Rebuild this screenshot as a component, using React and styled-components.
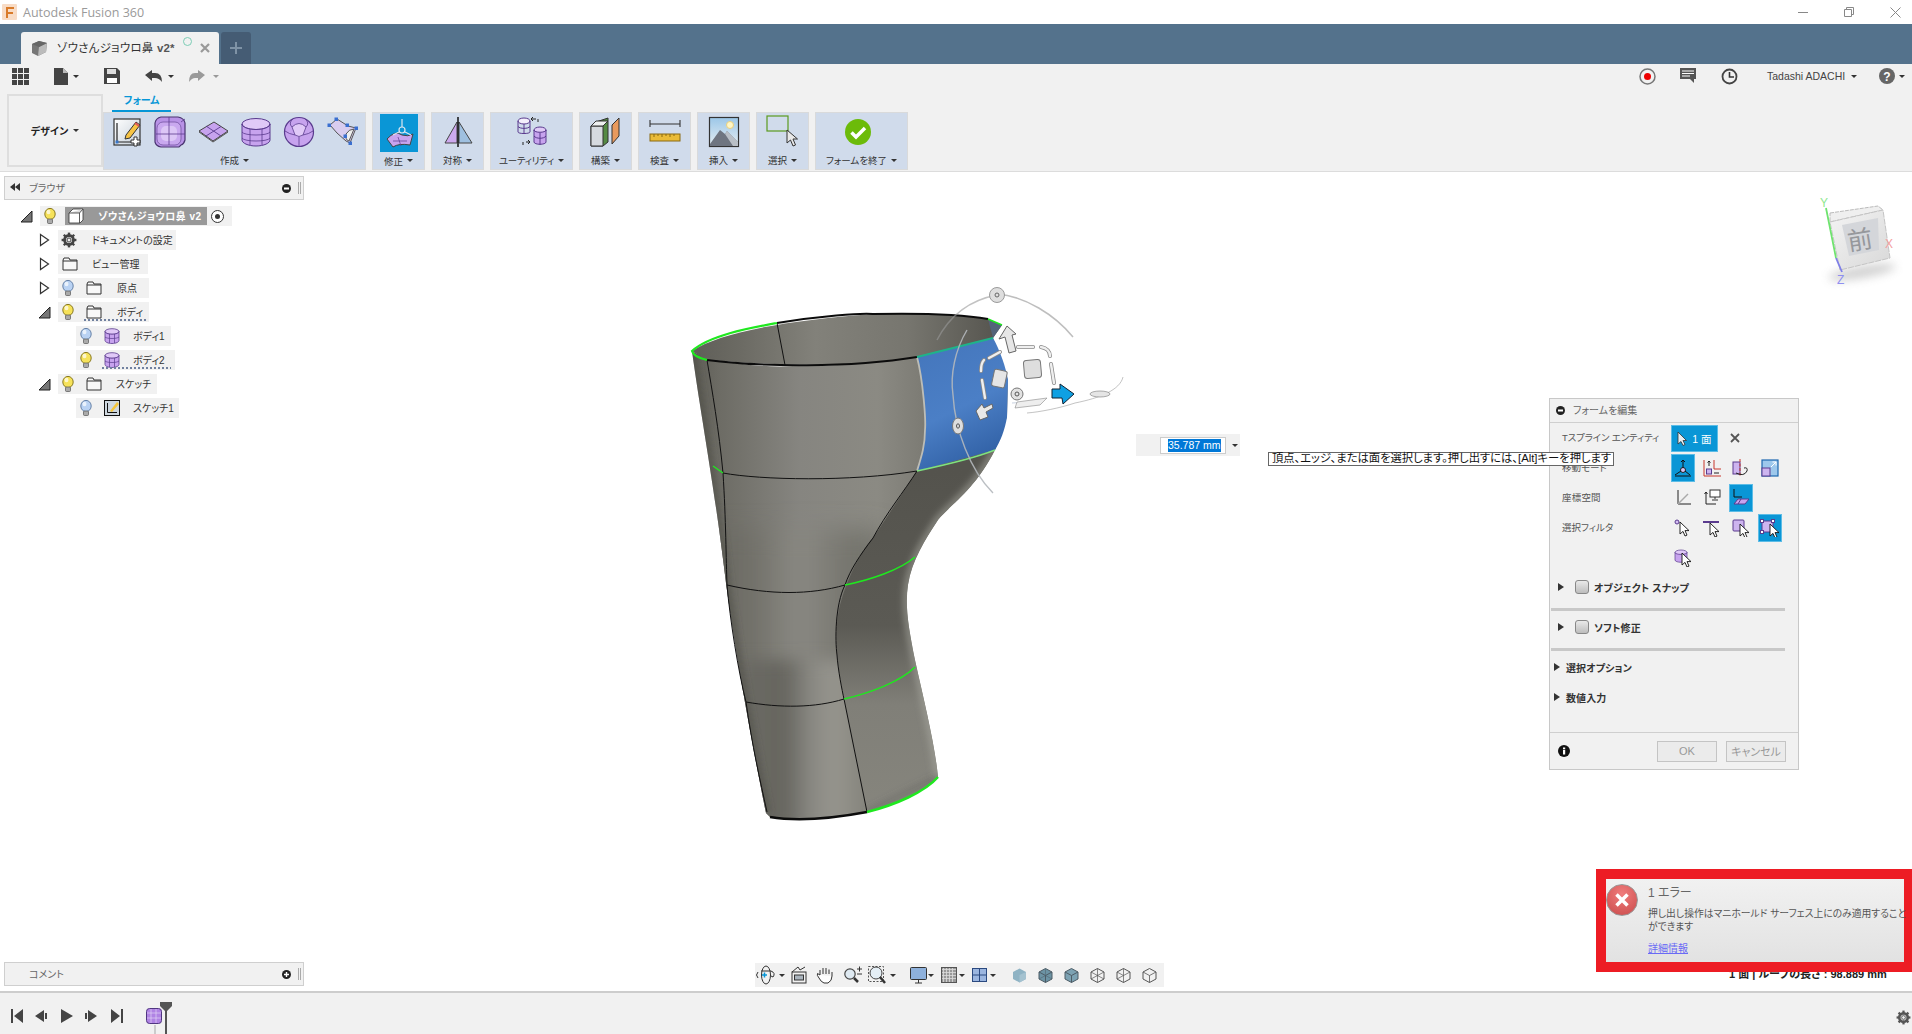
import React from 'react';
import styled, { createGlobalStyle } from 'styled-components';

const Global = createGlobalStyle`
  html, body { margin: 0; padding: 0; background: #fff; }
  body { font-family: "Liberation Sans", "Noto Sans CJK JP", sans-serif; font-feature-settings: "palt"; overflow: hidden; }
  #root { width: 1912px; height: 1034px; }
  * { box-sizing: border-box; }
`;

const Page = styled.div`width:1912px;height:1034px;display:flex;flex-direction:column;overflow:hidden;background:#fff;`;
const TitleBar = styled.div`height:24px;flex:none;display:flex;align-items:center;background:#fff;padding-left:2px;position:relative;`;
const TitleText = styled.span`font:12.5px "Open Sans",sans-serif;color:#9a9a9a;margin-left:5px;`;
const WinControls = styled.div`margin-left:auto;display:flex;align-items:center;gap:36px;padding-right:11px;`;
const TabBar = styled.div`height:40px;flex:none;background:#54728c;display:flex;align-items:flex-end;padding-left:21px;gap:2px;`;
const Tab = styled.div`width:198px;height:32px;background:#f1f1f1;border-radius:3px 3px 0 0;display:flex;align-items:center;padding-left:10px;position:relative;`;
const TabTitle = styled.span`font-size:11.5px;color:#333;margin-left:9px;letter-spacing:.2px;white-space:nowrap;padding-bottom:2px;`;
const TabVer = styled.b`color:#555;`;
const TabDot = styled.span`position:absolute;left:162px;top:5px;width:9px;height:9px;border:1.5px solid #7ccdb6;border-radius:50%;`;
const TabClose = styled.span`position:absolute;left:179px;top:11px;`;
const NewTab = styled.div`width:30px;height:32px;background:#455c74;border-radius:3px 3px 0 0;display:flex;align-items:center;justify-content:center;`;
const QuickBar = styled.div`height:28px;flex:none;background:#f1f1f1;display:flex;align-items:center;padding-bottom:4px;position:relative;`;
const QuickSlot = styled.div`display:flex;align-items:center;flex:none;margin-left:${p=>p.$ml}px;`;
const UserName = styled.span`font-size:10.5px;color:#444;white-space:nowrap;`;
const Caret = styled.span`display:inline-block;flex:none;width:0;height:0;border-left:${p=>p.$s||3}px solid transparent;border-right:${p=>p.$s||3}px solid transparent;border-top:${p=>p.$s?p.$s:3}px solid ${p=>p.$c||'#333'};margin-left:${p=>p.$ml??0}px;`;
const Ribbon = styled.div`height:80px;flex:none;background:#f1f1f1;border-bottom:1px solid #dcdcdc;display:flex;align-items:flex-start;padding-left:7px;`;
const DesignBtn = styled.div`width:96px;height:73px;margin-top:2px;border:2px solid #dedede;display:flex;align-items:center;justify-content:center;font-size:10px;font-weight:700;color:#222;gap:5px;`;
const RibbonCol = styled.div`display:flex;flex-direction:column;`;
const RibbonTab = styled.div`height:20px;margin-left:9px;width:59px;text-align:center;font-size:10px;font-weight:700;color:#0696d7;border-bottom:2px solid #0696d7;line-height:17px;`;
const Groups = styled.div`display:flex;gap:6px;`;
const Group = styled.div`width:${p=>p.$w}px;height:58px;background:#d0dbeb;border:1px solid #d9dadb;display:flex;flex-direction:column;align-items:center;`;
const GroupIcons = styled.div`height:38px;display:flex;align-items:center;justify-content:center;gap:11px;margin-right:${p=>p.$mr||0}px;`;
const ActiveIcon = styled.div`width:38px;height:38px;background:#0a96d6;display:flex;align-items:center;justify-content:center;margin-top:1px;`;
const GroupLabel = styled.div`flex:1;display:flex;align-items:center;gap:4px;font-size:9.5px;letter-spacing:${p=>p.$ls||0}px;color:#333;white-space:nowrap;`;

const Viewport = styled.div`flex:1;position:relative;background:#fff;overflow:hidden;`;
const Scene = styled.svg`position:absolute;left:0;top:0;display:block;`;
const SidePanel = styled.div`position:absolute;left:4px;top:${p=>p.$top}px;width:300px;height:24px;background:#f1f1f1;border:1px solid #cfcfcf;display:flex;align-items:center;font-size:10px;color:#666;padding-left:${p=>p.$pl}px;padding-bottom:2px;`;
const PanelTitle = styled.span`margin-left:9px;`;
const PanelRight = styled.div`margin-left:auto;display:flex;align-items:center;gap:7px;padding-right:2px;padding-top:2px;`;
const Grip = styled.span`width:3px;height:12px;border-left:1px solid #aaa;border-right:1px solid #aaa;`;
const Tree = styled.div`position:absolute;left:20px;top:34px;display:flex;flex-direction:column;gap:4px;`;
const TreeRow = styled.div`display:flex;align-items:center;height:20px;margin-left:${p=>p.$level*18}px;`;
const Toggle = styled.div`width:20px;flex:none;display:flex;align-items:center;padding-left:${p=>p.$pl||0}px;`;
const RowBody = styled.div`position:relative;height:20px;width:${p=>p.$w}px;background:#f1f1f1;display:flex;align-items:center;padding-left:${p=>p.$pl||3}px;font-size:10px;color:#333;white-space:nowrap;`;
const RowLabel = styled.span`margin-left:${p=>p.$ml}px;padding-bottom:2px;`;
const RowIcon = styled.span`display:flex;flex:none;margin-left:${p=>p.$ml}px;`;
const Wavy = styled.span`position:absolute;left:${p=>p.$l}px;width:${p=>p.$w}px;bottom:0;height:4px;background:radial-gradient(circle,#71819f 1.1px,transparent 1.5px) 0 0/4px 4px repeat-x;`;
const RootPill = styled.div`margin-left:8px;width:142px;height:18px;background:#999;display:flex;align-items:center;padding-left:3px;color:#fff;font-weight:700;font-size:10px;letter-spacing:.4px;`;
const RootName = styled.span`margin-left:14px;padding-bottom:2px;`;
const RootRadio = styled.span`margin-left:4px;width:13px;height:13px;border:1.4px solid #333;border-radius:50%;background:#fff;display:flex;align-items:center;justify-content:center;&::after{content:"";width:5px;height:5px;border-radius:50%;background:#333;}`;

const ValueBox = styled.div`position:absolute;left:1136px;top:262px;width:104px;height:22px;background:#f1f1f1;display:flex;align-items:center;padding-left:24px;`;
const ValueInput = styled.div`width:66px;height:17px;background:#fff;border:1px solid #ccc;padding-left:7px;display:flex;align-items:center;`;
const ValueSel = styled.span`background:#0078d7;color:#fff;font-size:10.5px;line-height:13px;white-space:nowrap;`;
const Hint = styled.div`position:absolute;left:1268px;top:280px;width:346px;height:14px;background:#fff;border:1px solid #666;color:#111;font-size:11.3px;line-height:11px;padding-left:3px;white-space:nowrap;z-index:5;`;

const FormPanel = styled.div`position:absolute;left:1549px;top:226px;width:250px;height:372px;background:#f1f1f1;border:1px solid #c8c8c8;display:flex;flex-direction:column;`;
const FormHead = styled.div`height:24px;flex:none;border-bottom:1px solid #cfcfcf;display:flex;align-items:center;padding-left:6px;gap:6px;font-size:10px;color:#666;`;
const FormTitle = styled.span`margin-left:2px;padding-bottom:2px;`;
const FormRow = styled.div`height:30px;flex:none;display:flex;align-items:center;gap:5px;padding-left:12px;`;
const FormLabel = styled.div`width:109px;flex:none;margin-right:-5px;padding-bottom:3px;font-size:9.5px;letter-spacing:${p=>p.$ls||0}px;color:#555;white-space:nowrap;`;
const Cell = styled.div`width:24px;height:28px;flex:none;display:flex;align-items:center;justify-content:center;background:${p=>p.$on?'#0a96d6':'transparent'};border:${p=>p.$on?'1px solid #5cbce6':'none'};`;
const FaceBtn = styled.div`width:47px;height:27px;background:#0a96d6;border:1px solid #5cbce6;color:#fff;display:flex;align-items:center;justify-content:center;gap:5px;font-size:10.5px;`;
const Fold = styled.div`height:${p=>p.$h||28}px;flex:none;display:flex;align-items:center;padding-left:${p=>p.$pl}px;font-size:10px;font-weight:700;color:#333;letter-spacing:.1px;`;
const FoldTri = styled.span`width:0;height:0;border-top:4px solid transparent;border-bottom:4px solid transparent;border-left:6px solid #333;margin-right:${p=>p.$mr}px;flex:none;`;
const Check = styled.span`width:14px;height:14px;border:1px solid #888;border-radius:3px;background:linear-gradient(#e9e9e9,#bdbdbd);margin-right:5px;flex:none;`;
const Sep = styled.div`height:3px;flex:none;background:#c8c8c8;margin:${p=>p.$mt}px 13px ${p=>p.$mb}px 1px;`;
const FormFoot = styled.div`margin-top:auto;height:37px;flex:none;border-top:1px solid #cfcfcf;display:flex;align-items:center;padding-left:8px;`;
const FootBtn = styled.div`width:60px;height:21px;border:1px solid #c4c4c4;background:#ebebeb;color:#999;font-size:11px;display:flex;align-items:center;justify-content:center;margin-left:${p=>p.$ml}px;`;
const Status = styled.div`position:absolute;left:1729px;top:793px;font-size:11px;font-weight:700;color:#222;white-space:nowrap;`;
const ErrorBox = styled.div`position:absolute;left:1596px;top:697px;width:316px;height:103px;border:10px solid #ed1c24;border-right-width:8px;background:linear-gradient(#f1f1f1,#e2e2e2);display:flex;z-index:3;`;
const ErrIcon = styled.div`width:32px;height:32px;flex:none;margin-top:5px;border-radius:50%;background:radial-gradient(circle at 50% 30%,#f07c7c,#c94a4a);border:1px solid #999;display:flex;align-items:center;justify-content:center;`;
const ErrBody = styled.div`margin-left:10px;width:258px;padding-top:6px;`;
const ErrTitle = styled.div`font-size:12px;color:#666;line-height:16px;`;
const ErrMsg = styled.div`font-size:9.8px;color:#555;line-height:13px;margin-top:6px;white-space:nowrap;`;
const ErrLink = styled.div`font-size:10px;color:#6a6af5;text-decoration:underline;margin-top:7px;`;
const NavBar = styled.div`position:absolute;left:755px;top:791px;width:409px;height:24px;background:#f1f1f1;display:flex;align-items:center;`;
const NavSlot = styled.div`width:${p=>p.$w}px;margin-left:${p=>p.$ml||0}px;flex:none;display:flex;align-items:center;justify-content:center;`;
const Timeline = styled.div`height:43px;flex:none;background:#f1f1f1;border-top:2px solid #cdcdcd;display:flex;align-items:center;padding:4px 0 0 11px;position:relative;`;
const TimeBtn = styled.div`width:12px;margin-right:${p=>p.$mr}px;flex:none;display:flex;`;
const Playhead = styled.div`position:absolute;left:160px;top:9px;width:12px;height:34px;`;
const FeatLine = styled.span`position:absolute;left:154px;top:32px;width:2px;height:9px;background:#ccc;`;
const GearSlot = styled.div`position:absolute;right:1px;top:17px;`;

const S = styled.svg`display:block;flex:none;`;
const P='#c7a3ee', PD='#5a3b8e', PL='#e0c9f7';
const Ic=({w=32,h,children,...r})=><S width={w} height={h||w} viewBox={`0 0 ${w} ${h||w}`} {...r}>{children}</S>;

const Cursor=({x=0,y=0,s=1,f='#fff'})=><path transform={`translate(${x} ${y}) scale(${s})`} d="M0 0v12l3-2.6 2 4.6 2-.9-2-4.5h4z" fill={f} stroke="#111" strokeWidth=".9"/>;
const Bulb=({on})=>(<Ic w={14} h={18}><ellipse cx="7" cy="7" rx="5.2" ry="5.6" fill={on?'#f6e25a':'#b9d2f3'} stroke={on?'#8a7a20':'#6682a8'}/><ellipse cx="5.5" cy="5" rx="2" ry="2.2" fill="#fff" opacity=".7"/><rect x="4.5" y="12" width="5" height="4.5" rx="1" fill="#aaa" stroke="#555" strokeWidth=".7"/></Ic>);
const Folder=()=>(<Ic w={16} h={14}><path d="M1 3V13H15V3H8L7 1H2L1 3ZM1 4H15" fill="#f8f8f8" stroke="#333"/></Ic>);
const Gear=({c='#444',s=16})=>(<Ic w={s} h={s}><g transform={`scale(${s/16})`}><circle cx="8" cy="8" r="4.6" fill="none" stroke={c} strokeWidth="2.6"/><g stroke={c} strokeWidth="2.4">{[0,45,90,135].map(a=><line key={a} x1="8" y1=".6" x2="8" y2="15.4" transform={`rotate(${a} 8 8)`}/>)}</g><circle cx="8" cy="8" r="3" fill="#f1f1f1"/><circle cx="8" cy="8" r="2" fill="none" stroke={c}/></g></Ic>);
const Open=()=>(<Ic w={14} h={14}><path d="M1 13L12 2V13Z" fill="#777" stroke="#222"/></Ic>);
const Closed=()=>(<Ic w={11} h={14}><path d="M1.5 1.5L9.5 7L1.5 12.5Z" fill="#fff" stroke="#333" strokeWidth="1.2"/></Ic>);
const BodyIc=({w=16})=>(<Ic w={w} h={w}><g transform={`scale(${w/16})`}><ellipse cx="8" cy="3.5" rx="7" ry="2.8" fill={PL} stroke={PD} strokeWidth=".8"/><path d="M1 3.5V12.5C1 14 4 15.5 8 15.5S15 14 15 12.5V3.5C15 5 12 6.2 8 6.2S1 5 1 3.5Z" fill={P} stroke={PD} strokeWidth=".8"/><path d="M1 9C3 11 13 11 15 9M5.5 6V15M10.5 6V15" stroke={PD} strokeWidth=".7" fill="none"/></g></Ic>);

const CreateSketch=()=>(<Ic><rect x="3" y="3" width="26" height="26" fill="url(#skg)" stroke="#333" strokeWidth="1.2"/><path d="M6 7V26H26" stroke="#222" strokeWidth="1.2" fill="none"/><rect x="4.5" y="24.5" width="3" height="3" fill="#3a77c8"/><path d="M15 19L25 6l4 3-10 13-5 1z" fill="#f6c344" stroke="#333"/><path d="M24 7l4 3" stroke="#e25a5a" strokeWidth="2"/><path d="M23 21h3v3h3v3h-3v3h-3v-3h-3v-3h3z" fill="#fff" stroke="#333"/></Ic>);
const BoxIc=()=>(<Ic><path d="M7 1H24Q30 2 31 7V24Q30 28 27 29L25 31H7Q2 30 1 26V7Q2 2 7 1Z" fill="#b892e6" stroke="#4a3570" strokeWidth="1.2"/><rect x="3" y="6" width="24" height="23" rx="6" fill="#c9a8ef" stroke="#6a4a9a" strokeWidth=".7"/><rect x="7" y="10" width="16" height="15" rx="5" fill="#dcc6f6"/><path d="M15 1V29M2 18H27M27 18H31M27 6L31 3" stroke="#5a3b8e" strokeWidth=".8" fill="none"/></Ic>);
const PlaneIc=()=>(<Ic><path d="M2 15L17 6L31 15L16 25Z" fill={P} stroke="#444"/><path d="M9 10L24 20M24 10.500L9 20" stroke={PD} strokeWidth=".9"/><path d="M2 16L16 26L31 16" stroke="#555" fill="none"/></Ic>);
const CylIc=()=>(<Ic><ellipse cx="16" cy="8" rx="14" ry="5.500" fill={PL} stroke={PD}/><path d="M2 8V24C2 27 8 30 16 30S30 27 30 24V8C30 11 24 13.500 16 13.500S2 11 2 8Z" fill={P} stroke={PD}/><path d="M2 16C4 20 28 20 30 16M2 22C4 26 28 26 30 22M10 13V29M22 13V29" fill="none" stroke={PD} strokeWidth=".8"/></Ic>);
const SphereIc=()=>(<Ic><circle cx="16" cy="16" r="14.500" fill={P} stroke={PD} strokeWidth="1.2"/><path d="M9 11Q16 4 23 11L20 19Q16 22 12 19Z" fill={PL} stroke={PD} strokeWidth=".8"/><path d="M2 15Q6 18 12 19M30 15Q26 18 20 19M16 21V30M9 11Q5 7 10 3M23 11Q27 7 22 3" fill="none" stroke={PD} strokeWidth=".8"/></Ic>);
const PatchIc=()=>(<Ic><path d="M4 9L11 3L22 10L30 12L24 27L20 25L11 17Z" fill="#d9cdef" stroke="#555"/><path d="M20 18Q23 13 28 13L23 25Q19 24 20 18Z" fill="#eee" stroke="#555"/>{[[3,9],[10,3],[21,9],[30,12],[24,27],[19,20]].map(([x,y],i)=><rect key={i} x={x-1.500} y={y-1.500} width="3.500" height="3.500" fill="#3a6fd0"/>)}</Ic>);
const ModifyIc=()=>(<Ic><path d="M4 22Q12 13 19 18Q25 20 30 17L27 28Q16 26 10 30Z" fill={P} stroke="#444"/><path d="M10 24L24 24M15 20L18 29" stroke={PD} strokeWidth=".7"/><g stroke="#dce6ee" fill="none" strokeWidth="1.2"><circle cx="19" cy="13" r="3"/><path d="M19 2v8M16 15l-6 3M22 15l6 3"/></g></Ic>);
const MirrorIc=()=>(<Ic><path d="M15 6L3 27H15Z" fill="#cda9ee" stroke="#444"/><path d="M17 6L30 27H17Z" fill="#9fc0e0" stroke="#444"/><line x1="16" y1="1" x2="16" y2="31" stroke="#111" strokeWidth="1.500"/></Ic>);
const UtilIc=()=>(<Ic w={36} h={32}><g transform="translate(2 1)"><ellipse cx="8" cy="4" rx="6" ry="3" fill="#f5f0fc" stroke={PD}/><path d="M2 4V15C2 17 14 17 14 15V4M2 9.500C4 12 12 12 14 9.500M8 7V17" fill="none" stroke={PD}/></g><g transform="translate(19 11)"><ellipse cx="7" cy="3" rx="6" ry="3" fill={PL} stroke={PD}/><path d="M1 3V15C1 18 13 18 13 15V3C13 6 1 6 1 3ZM1 9C3 12 11 12 13 9M7 6V18" fill={P} stroke={PD}/></g><path d="M22 3H17M17 3l2-2M17 3l2 2M24 6V3M12 26H16M16 26l-2-2M16 26l-2 2M9 29V26" stroke="#222" fill="none" strokeWidth="1"/></Ic>);
const ConstructIc=()=>(<Ic w={34} h={32}><path d="M2 10V30H14L19 26V2L7 6Z" fill="#558a44" stroke="#333"/><path d="M2 10H14V30H2Z" fill="#d6dadf" stroke="#333"/><path d="M2 10L7 5H19L14 10Z" fill="#eef0f0" stroke="#333"/><path d="M23 28L30 20V2L23 9Z" fill="#e89a5e" stroke="#333"/></Ic>);
const RulerIc=()=>(<Ic><path d="M1 8H31M1 4V11M31 4V11" stroke="#333" fill="none" strokeWidth="1.1"/><rect x="1" y="18" width="30" height="7" fill="#eabb38" stroke="#8a6b12"/><path d="M5 18v3M9 18v2M13 18v3M17 18v2M21 18v3M25 18v2" stroke="#8a6b12"/></Ic>);
const ImageIc=()=>(<Ic w={32}><defs><linearGradient id="skyg" x1="0" y1="0" x2="0" y2="1"><stop offset="0" stopColor="#9cc7e8"/><stop offset="1" stopColor="#e6eef2"/></linearGradient></defs><rect x="1.500" y="1.500" width="29" height="29" fill="url(#skyg)" stroke="#333" strokeWidth="1.2"/><circle cx="22" cy="9" r="3.500" fill="#fff6c4" stroke="#e8cf7d"/><path d="M2 28L12 14L17 18L19 15L30 26V30H2Z" fill="#6f7580"/><path d="M17 18L19 15L30 26V30L25 30Z" fill="#b9bfc6"/></Ic>);
const SelectIc=()=>(<Ic w={34} h={34}><rect x="1" y="1" width="21" height="15" fill="none" stroke="#5b9a1e" strokeWidth="1.200"/><g transform="translate(21 15)"><path d="M0 0V13L3.500 10L6 16L8.500 15L6 9H10.500Z" fill="#e8e8e8" stroke="#333"/></g></Ic>);
const FinishIc=()=>(<Ic w={26}><circle cx="13" cy="13" r="13" fill="#6cbb0a"/><path d="M6.500 13.500L11 18L20 9" stroke="#fff" strokeWidth="3.500" fill="none"/></Ic>);

const Axis=()=>(<Ic w={18} h={18}><path d="M4 1V15H17" fill="none" stroke="#222"/><path d="M4 15L14 5" stroke="#aaa" strokeWidth="1.500"/></Ic>);
const MoveA=()=>(<Ic w={18} h={18}><circle cx="9" cy="11" r="2.500" fill="#d9c2f2" stroke="#222"/><path d="M9 1V9M7 3L9 1L11 3M1 16L7 12M16 16L11 12M1 17H17" stroke="#111" fill="none"/></Ic>);
const MoveB=()=>(<Ic w={18} h={18}><path d="M1 1V17H18M11 1V10H18" stroke="#c8362d" fill="none"/><rect x="3.500" y="10" width="5" height="5" fill="#cdb4ef" stroke={PD}/><path d="M6 7V2M4.500 3.500L6 2L7.500 3.500M11 14H16" stroke="#222" fill="none"/></Ic>);
const MoveC=()=>(<Ic w={18} h={18}><rect x="1" y="3" width="7" height="12" fill="#cdb4ef" stroke={PD}/><path d="M8 0V18" stroke="#c8362d" strokeDasharray="3 1.500"/><path d="M4 14Q12 18 15 12Q16 8 12 9" stroke="#222" fill="none"/></Ic>);
const MoveD=()=>(<Ic w={18} h={18}><rect x="1" y="1" width="16" height="16" fill="#9dc8ec" stroke="#1d68b0" strokeWidth="1.200"/><rect x="1" y="9" width="8" height="8" fill="#cdb4ef" stroke={PD}/><path d="M10 8L15 3M11.500 3H15V6.500" stroke="#fff" fill="none"/></Ic>);
const CoordB=()=>(<Ic w={18} h={18}><path d="M3 3V15H13M3 3L1.500 5M3 3L4.500 5" stroke="#222" fill="none"/><rect x="7" y="1" width="10" height="7" fill="#fff" stroke="#333"/><path d="M12 8v2M9 11h6" stroke="#333"/></Ic>);
const CoordC=()=>(<Ic w={20} h={20}><path d="M3 1V9H11" stroke="#111" fill="none"/><path d="M3 16L7 11H18L14 16Z" fill="#c7a3ee" stroke={PD}/><path d="M10 11L7 16" stroke={PD}/></Ic>);
const FilterV=()=>(<Ic w={18} h={18}><circle cx="3" cy="3" r="2" fill="#d4bdf3" stroke={PD}/><Cursor x={6} y={3}/></Ic>);
const FilterE=()=>(<Ic w={18} h={18}><line x1="0" y1="3" x2="16" y2="3" stroke={PD} strokeWidth="2"/><Cursor x={7} y={4}/></Ic>);
const FilterF=()=>(<Ic w={18} h={18}><rect x="1" y="1" width="11" height="11" rx="1" fill="#cdb4ef" stroke={PD}/><Cursor x={8} y={5}/></Ic>);
const FilterP=()=>(<Ic w={20} h={18}><rect x="2" y="2" width="11" height="11" fill="#cdb4ef" stroke={PD}/>{[[2,2],[13,2],[2,13],[13,13]].map(([x,y],i)=><rect key={i} x={x-1.500} y={y-1.500} width="3" height="3" fill="#fff" stroke={PD}/>)}<Cursor x={10} y={5}/></Ic>);
const FilterB=()=>(<Ic w={18} h={18}><ellipse cx="7" cy="3.500" rx="6" ry="2.500" fill={PL} stroke={PD} strokeWidth=".7"/><path d="M1 3.500V11C1 14 13 14 13 11V3.500C13 6 1 6 1 3.500Z" fill={P} stroke={PD} strokeWidth=".7"/><Cursor x={8} y={4}/></Ic>);

const Orbit=()=>(<Ic w={20}><ellipse cx="10" cy="10" rx="4.500" ry="9" fill="none" stroke="#333"/><path d="M2 7Q-1 10 2 13M5 6H15Q20 8 17 12L15 11" fill="none" stroke="#333"/><path d="M6 10h5M8.500 7.500v5" stroke="#0696d7" strokeWidth="1.500"/></Ic>);
const Fit=()=>(<Ic w={18} h={18}><rect x="2" y="6" width="14" height="11" fill="#f1f1f1" stroke="#333"/><rect x="4.500" y="9" width="9" height="5" fill="#aab4bd" stroke="#333"/><path d="M2 6L8 1L10 4L15 1" stroke="#333" fill="none"/></Ic>);
const Hand=()=>(<Ic w={18} h={18}><path d="M4 9V4M7 8V2M10 8V2M13 8V3.500M16 10V6M4 9L1.500 7.500Q.5 9 3 12Q5 16 8 17H12Q16 15 16 10" fill="#fff" stroke="#333"/></Ic>);
const ZoomIc=()=>(<Ic w={20} h={18}><circle cx="7" cy="8" r="5.200" fill="#dfeaf2" stroke="#444" strokeWidth="1.200"/><path d="M11 12L15 16" stroke="#333" strokeWidth="2.500"/><path d="M14 3h5M16.500 .5v5M14 8h5" stroke="#333"/></Ic>);
const ZoomWin=()=>(<Ic w={18} h={18}><rect x=".5" y=".5" width="15" height="15" fill="none" stroke="#555" strokeDasharray="2 1.500"/><circle cx="8" cy="7" r="6" fill="#e4eef5" stroke="#444"/><path d="M12 11L17 17" stroke="#333" strokeWidth="2.500"/></Ic>);
const Display=()=>(<Ic w={17} h={17}><rect x=".5" y=".5" width="16" height="12" rx="1" fill="#8eb1dc" stroke="#333"/><path d="M5 16h7M8.500 13v3" stroke="#333"/></Ic>);
const GridIc=()=>(<Ic w={16} h={16}><rect width="16" height="16" fill="#999"/><path d="M2.500 0V16M5.500 0V16M8.500 0V16M11.500 0V16M0 2.500H16M0 5.500H16M0 8.500H16M0 11.500H16" stroke="#ddd" strokeWidth=".8"/><rect x=".5" y=".5" width="15" height="15" fill="none" stroke="#555"/></Ic>);
const Views=()=>(<Ic w={15} h={14}><rect x=".5" y=".5" width="14" height="13" fill="#9bb6e0" stroke="#2b4a80"/><path d="M7.500 0V14M0 7H15" stroke="#2b4a80"/></Ic>);
const Cube=({m})=>{const s=m>2?'#555':'#4d5c66',f=m===0?'#8fb3c4':m===1?'#6c93a4':m===2?'#7ca2b3':'none';return(<Ic w={15} h={15}><path d="M7.500 .5L14 4V11L7.500 14.500L1 11V4Z" fill={f} stroke={m===0?'none':s}/>{m===0&&<path d="M7.500 7L14 4V11L7.500 14.500Z" fill="#a4c2d0"/>}{m>0&&m<3&&<path d="M1 4L7.500 7.500L14 4M7.500 7.500V14.500" fill="none" stroke={s}/>}{m===1&&<path d="M7.500 .5V7.500M1 11L7.500 7.500L14 11" fill="none" stroke={s} strokeWidth=".5"/>}{m===3&&<path d="M1 4L14 11M14 4L1 11M7.500 .5V14.500" fill="none" stroke={s} strokeWidth=".7"/>}{m===4&&<path d="M1 4L7.500 7.500L14 4M7.500 7.500V14.500M7.500 .5V7.500M1 11L7.500 7.500" fill="none" stroke={s} strokeWidth=".7"/>}{m===5&&<path d="M1 4L7.500 7.500L14 4M7.500 7.500V14.500" fill="none" stroke={s} strokeWidth=".8"/>}</Ic>);};

const Blur=({id,d})=><filter id={id} x="-200%" y="-200%" width="500%" height="500%"><feGaussianBlur stdDeviation={d}/></filter>;

const Model=()=>{
 const body="M692,351 C710,362 760,368 793,366 C840,366 880,363 917,357 L993,338 L1008,380 L1007,417 L995,450 C975,490 950,505 938,520 C925,540 912,560 908,585 C905,605 908,625 915,660 C925,705 935,745 938,777 C925,792 895,805 867,812 C850,816 810,822 770,817 L766,813 C755,760 735,650 726,583 C715,490 700,410 692,351 Z";
 const right="M917,471 L995,450 C975,490 950,505 938,520 C925,540 912,560 908,585 C905,605 908,625 915,660 C925,705 935,745 938,777 C925,792 895,805 867,812 L844,699 C838,670 834,640 838,615 C842,590 860,550 873,538 Z";
 return(<g>
  <defs>
   <linearGradient id="bodyG" gradientUnits="userSpaceOnUse" x1="692" y1="0" x2="930" y2="0"><stop offset="0" stopColor="#5d5c55"/><stop offset=".12" stopColor="#6d6c65"/><stop offset=".45" stopColor="#868580"/><stop offset=".78" stopColor="#8b8a83"/><stop offset="1" stopColor="#7a7972"/></linearGradient>
   <linearGradient id="midG" gradientUnits="userSpaceOnUse" x1="715" y1="0" x2="850" y2="0"><stop offset="0" stopColor="#6a6962"/><stop offset=".3" stopColor="#72716a"/><stop offset=".62" stopColor="#8b8a84"/><stop offset="1" stopColor="#75746d"/></linearGradient>
   <linearGradient id="lowG" gradientUnits="userSpaceOnUse" x1="750" y1="0" x2="868" y2="0"><stop offset="0" stopColor="#6a6963"/><stop offset=".3" stopColor="#66655f"/><stop offset=".52" stopColor="#8a8983"/><stop offset=".72" stopColor="#96958e"/><stop offset="1" stopColor="#84837b"/></linearGradient>
   <linearGradient id="inG" gradientUnits="userSpaceOnUse" x1="692" y1="0" x2="1000" y2="0"><stop offset="0" stopColor="#5f5e58"/><stop offset=".15" stopColor="#6b6a63"/><stop offset=".4" stopColor="#82817a"/><stop offset=".7" stopColor="#77766f"/><stop offset="1" stopColor="#55544e"/></linearGradient>
   <linearGradient id="rightG" gradientUnits="userSpaceOnUse" x1="0" y1="470" x2="0" y2="815"><stop offset="0" stopColor="#54534d"/><stop offset=".45" stopColor="#5b5a54"/><stop offset=".68" stopColor="#807f78"/><stop offset="1" stopColor="#86857d"/></linearGradient>
   <linearGradient id="blueG" gradientUnits="userSpaceOnUse" x1="925" y1="350" x2="985" y2="470"><stop offset="0" stopColor="#4577bd"/><stop offset=".5" stopColor="#4b7fc6"/><stop offset="1" stopColor="#2d5ca0"/></linearGradient>
   <linearGradient id="cubeF" x1="0" y1="0" x2="1" y2="1"><stop offset="0" stopColor="#f4f4f4"/><stop offset="1" stopColor="#d8d8d8"/></linearGradient>
   <clipPath id="bodyClip"><path d={body}/></clipPath>
   <Blur id="b12" d={12}/><Blur id="b8" d={8}/><Blur id="b5" d={5}/><Blur id="b3" d={3}/>
  </defs>
  <path d="M692,351 C720,332 790,320 873,314 C920,313 965,315 988,319 L1002,325 L993,338 L917,357 C870,366 793,367 707,360 Z" fill="url(#inG)"/>
  <path d={body} fill="url(#bodyG)"/>
  <g clipPath="url(#bodyClip)">
   <rect x="692" y="530" width="190" height="160" fill="url(#midG)" filter="url(#b12)"/>
   <rect x="692" y="660" width="190" height="170" fill="url(#lowG)" filter="url(#b8)"/>
   <path d={right} fill="url(#rightG)"/>
   <path d="M995,450 C975,490 950,505 938,520 C925,540 912,560 908,585 C905,605 908,625 915,660 C925,705 935,745 938,777" fill="none" stroke="#a8a8a0" strokeOpacity=".55" strokeWidth="8" filter="url(#b3)"/>
   <path d="M938,777 L867,812" fill="none" stroke="#555" strokeOpacity=".3" strokeWidth="6" filter="url(#b3)"/>
   <path d="M692,351 C700,410 715,490 726,583 C735,650 755,760 766,813" fill="none" stroke="#4c4b45" strokeOpacity=".55" strokeWidth="9" filter="url(#b3)"/>
  </g>
  <path d="M917,357 L993,338 C1000,350 1006,368 1008,380 L1007,417 C1005,430 1000,442 995,450 L917,471 C922,455 925,445 925,430 C926,420 923,380 917,357Z" fill="url(#blueG)"/>
  <path d="M988,319 L1002,325 L993,338Z" fill="#54647a"/>
  <path d="M917,357 C923,380 926,420 925,430 C925,445 922,455 917,471" fill="none" stroke="#bdbdb6" strokeWidth="1.800"/>
  <g fill="none" stroke="#111" strokeWidth="1">
   <path d="M777,323 L785,365"/>
   <path d="M707,360 C712,390 719,430 723,473 C726,520 726,560 727,585 C730,620 738,670 746,702 C752,745 760,780 767,812"/>
   <path d="M723,473 C760,480 850,482 917,471"/>
   <path d="M917,471 C905,490 885,515 873,538 C860,555 850,570 845,585 C835,605 835,640 837,655 C838,670 842,690 844,699 L867,812"/>
   <path d="M727,585 C770,595 810,595 845,585"/>
   <path d="M746,702 C780,708 815,708 844,699"/>
  </g>
  <path d="M777,323 C820,316 860,313 873,314 C920,313 965,315 988,319" fill="none" stroke="#0c0c0c" strokeWidth="2"/>
  <path d="M707,360 C760,367 850,368 917,357" fill="none" stroke="#0c0c0c" strokeWidth="2"/>
  <path d="M770,817 C800,822 835,818 867,812" fill="none" stroke="#0c0c0c" strokeWidth="2.500"/>
  <g fill="none" stroke="#1fe81f">
   <path d="M707,360 C698,358 693,355 692,351 C710,335 750,328 777,323" strokeWidth="2.200"/>
   <path d="M867,812 C895,805 925,792 938,777" strokeWidth="2.500"/>
   <path d="M845,585 C870,580 900,570 915,557" strokeWidth="1.600"/>
   <path d="M844,699 C870,693 900,682 915,667" strokeWidth="1.600"/>
   <path d="M713,466 L723,473" strokeWidth="1.400"/>
   <path d="M917,357 L993,338" stroke="#1fb38a" strokeWidth="2"/>
   <path d="M917,471 C945,465 975,458 995,450" stroke="#7fe27f" strokeWidth="1.400"/>
   <path d="M988,319 L1002,325" strokeWidth="1.500"/>
  </g>
  <g fill="none">
   <path d="M937,340 C950,315 970,300 997,295" stroke="#999" strokeOpacity=".6" strokeWidth="1.500"/>
   <path d="M997,294 C1025,296 1055,315 1073,337" stroke="#888" strokeOpacity=".55" strokeWidth="1.500"/>
   <path d="M967,330 C955,350 950,375 953,395 C955,430 970,470 993,493" stroke="#b4b8bd" strokeOpacity=".9" strokeWidth="1.400"/>
   <path d="M1123,377 C1120,390 1100,398 1075,403 C1060,408 1040,412 1027,413" stroke="#888" strokeOpacity=".5"/>
  </g>
  <path d="M1012,403 L1030,402" stroke="#c9d2e0"/>
  <path d="M1017,402 L1047,398 L1040,405 L1015,408Z" fill="#eee" stroke="#888" strokeWidth=".6"/>
  <circle cx="997" cy="295" r="7.500" fill="#dedede" stroke="#9a9a9a"/><circle cx="997" cy="295" r="2" fill="none" stroke="#666"/>
  <ellipse cx="958" cy="426" rx="5.500" ry="8" fill="#dedede" stroke="#777"/><ellipse cx="958" cy="426" rx="1.500" ry="2.200" fill="none" stroke="#555"/>
  <circle cx="1017" cy="394" r="6" fill="#e2e2e2" stroke="#777"/><circle cx="1017" cy="394" r="2" fill="none" stroke="#555"/>
  <ellipse cx="1100" cy="394" rx="10" ry="3" fill="#e5e5e5" stroke="#888" strokeWidth=".7"/>
  <g fill="none" strokeLinecap="round">
   {[["#8a8a8a",4],["#efefef",2.400]].map(([c,w])=><g key={c} stroke={c} strokeWidth={w}>
     <path d="M989,358 L1000,352"/><path d="M1018,347 L1033,347"/><path d="M1041,347 C1047,348 1050,352 1050,356"/><path d="M1051,364 L1054,383"/><path d="M982,380 L985,398"/><path d="M981,371 C981,365 982,362 984,360"/>
   </g>)}
  </g>
  <rect x="1024" y="360" width="17" height="18" rx="3" fill="#dedede" stroke="#777" transform="rotate(-5 1032 369)"/>
  <rect x="993" y="370" width="13" height="17" rx="2" fill="#e5e5e5" stroke="#777" transform="rotate(12 999 378)"/>
  <path d="M1007,326 L1016,334 L1012,335 L1016,351 L1009,353 L1005,337 L999,339Z" fill="#e6e6e6" stroke="#666"/>
  <path d="M1052,389 L1060,389 L1060,384 L1074,394 L1063,404 L1062,398 L1052,398Z" fill="#0fa0e2" stroke="#123" strokeWidth="1"/>
  <path d="M976,412 L982,405 L984,409 L992,405 L993,409 L986,413 L988,418 L980,421Z" fill="#e8e8e8" stroke="#666" transform="translate(0 -1)"/>
  {/* view cube */}
  <ellipse cx="1862" cy="272" rx="34" ry="6" fill="#999" opacity=".45" filter="url(#b5)" transform="rotate(-10 1862 272)"/>
  <path d="M1830,213 L1878,206 L1883,210 L1830,222Z" fill="#efefef" stroke="#bbb" strokeDasharray="4 1"/>
  <path d="M1830,222 L1883,210 L1890,258 L1840,270Z" fill="url(#cubeF)" stroke="#c4c4c4" strokeDasharray="6 1"/>
  <path d="M1842,225 L1878,218 L1879,250 L1849,256Z" fill="#d4d6da"/>
  <text x="1860" y="249" fontSize="25" fontFamily="Noto Sans CJK JP" fill="#96989c" textAnchor="middle" transform="rotate(-9 1860 240)">前</text>
  <path d="M1826,208 L1836,258" stroke="#6fe36f" strokeWidth="1.800"/>
  <path d="M1836,258 L1842,272" stroke="#7f7fe8" strokeWidth="1.800"/>
  <text x="1820" y="207" fontSize="12" fill="#8fe88f">Y</text>
  <text x="1837" y="284" fontSize="12" fill="#8f8ff0">Z</text>
  <text x="1885" y="248" fontSize="12" fill="#f4a0a0">X</text>
 </g>);
};

export default function App(){
 return(<Page><Global/>
  <TitleBar>
   <Ic w={16} h={18}><rect x="0" y="1" width="15" height="16" rx="1" fill="#f8dcc6"/><path d="M4 4H12V6H6V9H11V11H6V15H4Z" fill="#d97b2a"/></Ic>
   <TitleText>Autodesk Fusion 360</TitleText>
   <WinControls>
    <Ic w={10} h={10}><line x1="0" y1="5.500" x2="10" y2="5.500" stroke="#888"/></Ic>
    <Ic w={10} h={10}><path d="M.5 2.500H7.500V9.500H.5ZM2.500 2.500V.5H9.500V7.500H7.500" fill="none" stroke="#888"/></Ic>
    <Ic w={11} h={11}><path d="M.5 .5L10.500 10.500M10.500 .5L.5 10.500" stroke="#888"/></Ic>
   </WinControls>
  </TitleBar>
  <TabBar>
   <Tab>
    <Ic w={17} h={17}><path d="M1 4L8 1L16 3L15 12L7 16L1 13Z" fill="#777"/><path d="M8 7L16 3L15 12L7 16Z" fill="#bbb"/><path d="M1 4L8 7L16 3L8 1Z" fill="#666"/></Ic>
    <TabTitle>ゾウさんジョウロ鼻 <TabVer>v2*</TabVer></TabTitle>
    <TabDot/>
    <TabClose><Ic w={10} h={10}><path d="M1 1L9 9M9 1L1 9" stroke="#999" strokeWidth="2.200"/></Ic></TabClose>
   </Tab>
   <NewTab><Ic w={12} h={12}><path d="M6 0V12M0 6H12" stroke="#7f93a6" strokeWidth="2"/></Ic></NewTab>
  </TabBar>
  <QuickBar>
   <QuickSlot $ml={12}><Ic w={17} h={17}><g fill="#444">{[0,6,12].map(x=>[0,6,12].map(y=><rect key={x+'-'+y} x={x} y={y} width="5" height="5"/>))}</g></Ic></QuickSlot>
   <QuickSlot $ml={25}><Ic w={14} h={17}><path d="M0 0H9L14 5V17H0Z" fill="#444"/><path d="M9 0V5H14" fill="#bbb"/></Ic><Caret $ml={5}/></QuickSlot>
   <QuickSlot $ml={25}><Ic w={16} h={16}><path d="M0 0H13L16 3V16H0Z" fill="#444"/><rect x="3" y="1" width="9" height="5" fill="#ddd"/><rect x="3" y="10" width="10" height="5" fill="#fff"/></Ic></QuickSlot>
   <QuickSlot $ml={25}><Ic w={17} h={13}><path d="M0 5L7 0V3H10Q17 3 17 12Q14 8 10 8H7V11Z" fill="#444"/></Ic><Caret $ml={6}/></QuickSlot>
   <QuickSlot $ml={15}><Ic w={16} h={13}><path d="M16 5L9 0V3H6Q0 3 0 12Q3 8 6 8H9V11Z" fill="#9a9a9a"/></Ic><Caret $ml={8} $c="#999"/></QuickSlot>
   <QuickSlot $ml={1420}><Ic w={17} h={17}><circle cx="8.500" cy="8.500" r="7.500" fill="#f1f1f1" stroke="#777" strokeWidth="1.500"/><circle cx="8.500" cy="8.500" r="3.500" fill="#e00"/></Ic></QuickSlot>
   <QuickSlot $ml={24}><Ic w={17} h={16}><path d="M0 0H16V11H14V15L10 11H0Z" fill="#555"/><path d="M2 3H14M2 5.500H14M2 8H10" stroke="#fff"/></Ic></QuickSlot>
   <QuickSlot $ml={24}><Ic w={17} h={17}><circle cx="8.500" cy="8.500" r="7" fill="#f1f1f1" stroke="#444" strokeWidth="1.800"/><path d="M8.500 4V9H13" stroke="#333" fill="none" strokeWidth="1.600"/></Ic></QuickSlot>
   <QuickSlot $ml={29}><UserName>Tadashi ADACHI</UserName><Caret $ml={6}/></QuickSlot>
   <QuickSlot $ml={22}><Ic w={16} h={16}><circle cx="8" cy="8" r="8" fill="#666"/><text x="8" y="12.500" textAnchor="middle" fontSize="12" fontWeight="700" fill="#fff">?</text></Ic><Caret $ml={4}/></QuickSlot>
  </QuickBar>
  <Ribbon>
   <DesignBtn>デザイン<Caret/></DesignBtn>
   <RibbonCol>
    <RibbonTab>フォーム</RibbonTab>
    <Groups>
     <Group $w={263}>
      <GroupIcons><CreateSketch/><BoxIc/><PlaneIc/><CylIc/><SphereIc/><PatchIc/></GroupIcons>
      <GroupLabel>作成<Caret/></GroupLabel>
     </Group>
     <Group $w={53}><ActiveIcon><ModifyIc/></ActiveIcon><GroupLabel>修正<Caret/></GroupLabel></Group>
     <Group $w={53}><GroupIcons><MirrorIc/></GroupIcons><GroupLabel>対称<Caret/></GroupLabel></Group>
     <Group $w={83}><GroupIcons><UtilIc/></GroupIcons><GroupLabel $ls={-.3}>ユーティリティ<Caret/></GroupLabel></Group>
     <Group $w={53}><GroupIcons><ConstructIc/></GroupIcons><GroupLabel>構築<Caret/></GroupLabel></Group>
     <Group $w={53}><GroupIcons><RulerIc/></GroupIcons><GroupLabel>検査<Caret/></GroupLabel></Group>
     <Group $w={53}><GroupIcons><ImageIc/></GroupIcons><GroupLabel>挿入<Caret/></GroupLabel></Group>
     <Group $w={53}><GroupIcons><SelectIc/></GroupIcons><GroupLabel>選択<Caret/></GroupLabel></Group>
     <Group $w={93}><GroupIcons $mr={7}><FinishIc/></GroupIcons><GroupLabel>フォームを終了<Caret/></GroupLabel></Group>
    </Groups>
   </RibbonCol>
  </Ribbon>
  <Viewport>
   <Scene width="1912" height="819" viewBox="0 172 1912 819">
    <defs><linearGradient id="skg" x1="0" y1="0" x2="1" y2="1"><stop offset="0" stopColor="#fff"/><stop offset="1" stopColor="#c5ced8"/></linearGradient></defs>
    <Model/>
   </Scene>
   <SidePanel $top={4} $pl={5}>
    <Ic w={10} h={8}><path d="M5 0V8L0 4ZM10 0V8L5 4Z" fill="#333"/></Ic><PanelTitle>ブラウザ</PanelTitle>
    <PanelRight><Ic w={9} h={9}><circle cx="4.500" cy="4.500" r="4.500" fill="#222"/><rect x="2" y="3.500" width="5" height="2" fill="#fff"/></Ic><Grip/></PanelRight>
   </SidePanel>
   <Tree>
    <TreeRow $level={0}><Toggle><Open/></Toggle>
     <RowBody $w={192}><Bulb on/><RootPill><Ic w={16} h={16}><path d="M1 5L5 1H15V12L12 15H1Z" fill="#fff" stroke="#333" strokeWidth=".8"/><path d="M1 5H11.500L15 1M11.500 5V15" stroke="#333" fill="#ddd" strokeWidth=".8"/></Ic><RootName>ゾウさんジョウロ鼻 v2</RootName></RootPill><RootRadio/></RowBody>
    </TreeRow>
    <TreeRow $level={1}><Toggle $pl={1}><Closed/></Toggle><RowBody $w={118}><Gear/><RowLabel $ml={15}>ドキュメントの設定</RowLabel></RowBody></TreeRow>
    <TreeRow $level={1}><Toggle $pl={1}><Closed/></Toggle><RowBody $w={90} $pl={4}><Folder/><RowLabel $ml={14}>ビュー管理</RowLabel></RowBody></TreeRow>
    <TreeRow $level={1}><Toggle $pl={1}><Closed/></Toggle><RowBody $w={91}><Bulb/><RowIcon $ml={11}><Folder/></RowIcon><RowLabel $ml={15}>原点</RowLabel></RowBody></TreeRow>
    <TreeRow $level={1}><Toggle><Open/></Toggle><RowBody $w={91}><Bulb on/><RowIcon $ml={11}><Folder/></RowIcon><RowLabel $ml={15}>ボディ</RowLabel><Wavy $l={25} $w={64}/></RowBody></TreeRow>
    <TreeRow $level={2}><Toggle/><RowBody $w={95}><Bulb/><RowIcon $ml={11}><BodyIc/></RowIcon><RowLabel $ml={13}>ボディ1</RowLabel></RowBody></TreeRow>
    <TreeRow $level={2}><Toggle/><RowBody $w={99}><Bulb on/><RowIcon $ml={11}><BodyIc/></RowIcon><RowLabel $ml={13}>ボディ2</RowLabel><Wavy $l={25} $w={70}/></RowBody></TreeRow>
    <TreeRow $level={1}><Toggle><Open/></Toggle><RowBody $w={99}><Bulb on/><RowIcon $ml={11}><Folder/></RowIcon><RowLabel $ml={14}>スケッチ</RowLabel></RowBody></TreeRow>
    <TreeRow $level={2}><Toggle/><RowBody $w={103}><Bulb/><RowIcon $ml={11}><Ic w={16} h={16}><rect x=".5" y=".5" width="15" height="15" fill="#cfd8e0" stroke="#111"/><path d="M3.500 3V12.500H13" stroke="#111" fill="none"/><path d="M6 11L13 2L15 4L8 12Z" fill="#f3c53c"/></Ic></RowIcon><RowLabel $ml={13}>スケッチ1</RowLabel></RowBody></TreeRow>
   </Tree>
   <ValueBox><ValueInput><ValueSel>35.787 mm</ValueSel></ValueInput><Caret $ml={6}/></ValueBox>
   <FormPanel>
    <FormHead><Ic w={9} h={9}><circle cx="4.500" cy="4.500" r="4.500" fill="#222"/><rect x="2" y="3.500" width="5" height="2" fill="#fff"/></Ic><FormTitle>フォームを編集</FormTitle></FormHead>
    <FormRow><FormLabel $ls={-.15}>Tスプライン エンティティ</FormLabel><FaceBtn><Ic w={10} h={15}><path d="M1 1V13L4 10.500L6 14.500L8 13.500L6 9.500H9.500Z" fill="#e8eef2" stroke="#333" strokeWidth=".8"/></Ic>1 面</FaceBtn><Cell><Ic w={10} h={10}><path d="M1 1L9 9M9 1L1 9" stroke="#555" strokeWidth="1.800"/></Ic></Cell></FormRow>
    <FormRow><FormLabel>移動モード</FormLabel><Cell $on><MoveA/></Cell><Cell><MoveB/></Cell><Cell><MoveC/></Cell><Cell><MoveD/></Cell></FormRow>
    <FormRow><FormLabel $ls={.2}>座標空間</FormLabel><Cell><Axis/></Cell><Cell><CoordB/></Cell><Cell $on><CoordC/></Cell></FormRow>
    <FormRow><FormLabel>選択フィルタ</FormLabel><Cell><FilterV/></Cell><Cell><FilterE/></Cell><Cell><FilterF/></Cell><Cell $on><FilterP/></Cell></FormRow>
    <FormRow><FormLabel/><Cell><FilterB/></Cell></FormRow>
    <Fold $pl={8}><FoldTri $mr={11}/><Check/>オブジェクト スナップ</Fold>
    <Sep $mt={7} $mb={2}/>
    <Fold $pl={8}><FoldTri $mr={11}/><Check/>ソフト修正</Fold>
    <Sep $mt={7} $mb={1}/>
    <Fold $h={30} $pl={4}><FoldTri $mr={6}/>選択オプション</Fold>
    <Fold $h={30} $pl={4}><FoldTri $mr={6}/>数値入力</Fold>
    <FormFoot>
     <Ic w={12} h={12}><circle cx="6" cy="6" r="6" fill="#111"/><rect x="5" y="5" width="2.200" height="4.500" fill="#fff"/><rect x="5" y="2.500" width="2.200" height="1.800" fill="#fff"/></Ic>
     <FootBtn $ml={87}>OK</FootBtn><FootBtn $ml={9}>キャンセル</FootBtn>
    </FormFoot>
   </FormPanel>
   <Hint>頂点、エッジ、または面を選択します。押し出すには、[Alt]キーを押します</Hint>
   <Status>1 面 | ループの長さ : 98.889 mm</Status>
   <ErrorBox>
    <ErrIcon><Ic w={16} h={16}><path d="M2.500 2.500L13.500 13.500M13.500 2.500L2.500 13.500" stroke="#fff" strokeWidth="3.500"/></Ic></ErrIcon>
    <ErrBody>
     <ErrTitle>1 エラー</ErrTitle>
     <ErrMsg>押し出し操作はマニホールド サーフェス上にのみ適用すること<br/>ができます</ErrMsg>
     <ErrLink>詳細情報</ErrLink>
    </ErrBody>
   </ErrorBox>
   <SidePanel $top={790} $pl={24}>コメント
    <PanelRight><Ic w={9} h={9}><circle cx="4.500" cy="4.500" r="4.500" fill="#222"/><path d="M2 4.500H7M4.500 2V7" stroke="#fff" strokeWidth="1.400"/></Ic><Grip/></PanelRight>
   </SidePanel>
   <NavBar>
    <NavSlot $w={22}><Orbit/></NavSlot><NavSlot $w={10}><Caret/></NavSlot>
    <NavSlot $w={24}><Fit/></NavSlot><NavSlot $w={28}><Hand/></NavSlot><NavSlot $w={28}><ZoomIc/></NavSlot>
    <NavSlot $w={20}><ZoomWin/></NavSlot><NavSlot $w={12}><Caret/></NavSlot>
    <NavSlot $w={20} $ml={9}><Display/></NavSlot><NavSlot $w={6}><Caret/></NavSlot>
    <NavSlot $w={18} $ml={6}><GridIc/></NavSlot><NavSlot $w={6} $ml={1}><Caret/></NavSlot>
    <NavSlot $w={18} $ml={5}><Views/></NavSlot><NavSlot $w={6} $ml={2}><Caret/></NavSlot>
    <NavSlot $w={26} $ml={10}><Cube m={0}/></NavSlot><NavSlot $w={26}><Cube m={1}/></NavSlot><NavSlot $w={26}><Cube m={2}/></NavSlot><NavSlot $w={26}><Cube m={3}/></NavSlot><NavSlot $w={26}><Cube m={4}/></NavSlot><NavSlot $w={26}><Cube m={5}/></NavSlot>
   </NavBar>
  </Viewport>
  <Timeline>
   <TimeBtn $mr={12}><Ic w={12} h={14}><path d="M0 0H2V14H0ZM12 0V14L3 7Z" fill="#444"/></Ic></TimeBtn>
   <TimeBtn $mr={14}><Ic w={12} h={14}><path d="M9 1V13L0 7ZM10 4H12V10H10Z" fill="#444"/></Ic></TimeBtn>
   <TimeBtn $mr={12}><Ic w={12} h={14}><path d="M0 0L12 7L0 14Z" fill="#444"/></Ic></TimeBtn>
   <TimeBtn $mr={14}><Ic w={12} h={14}><path d="M3 1V13L12 7ZM0 4H2V10H0Z" fill="#444"/></Ic></TimeBtn>
   <TimeBtn $mr={23}><Ic w={12} h={14}><path d="M0 0L9 7L0 14ZM10 0H12V14H10Z" fill="#444"/></Ic></TimeBtn>
   <Ic w={16} h={16}><rect x=".5" y=".5" width="15" height="15" rx="3" fill="#b083e4" stroke="#4f3580"/><path d="M5 1V15M10 1V15M1 5H15M1 10H15" stroke="#e3d2f7" strokeWidth=".7"/></Ic>
   <FeatLine/>
   <Playhead><Ic w={12} h={34}><path d="M0 0H12V4L7 9V34H5V9L0 4Z" fill="#555"/></Ic></Playhead>
   <GearSlot><Gear c="#555" s={15}/></GearSlot>
  </Timeline>
 </Page>);
}
